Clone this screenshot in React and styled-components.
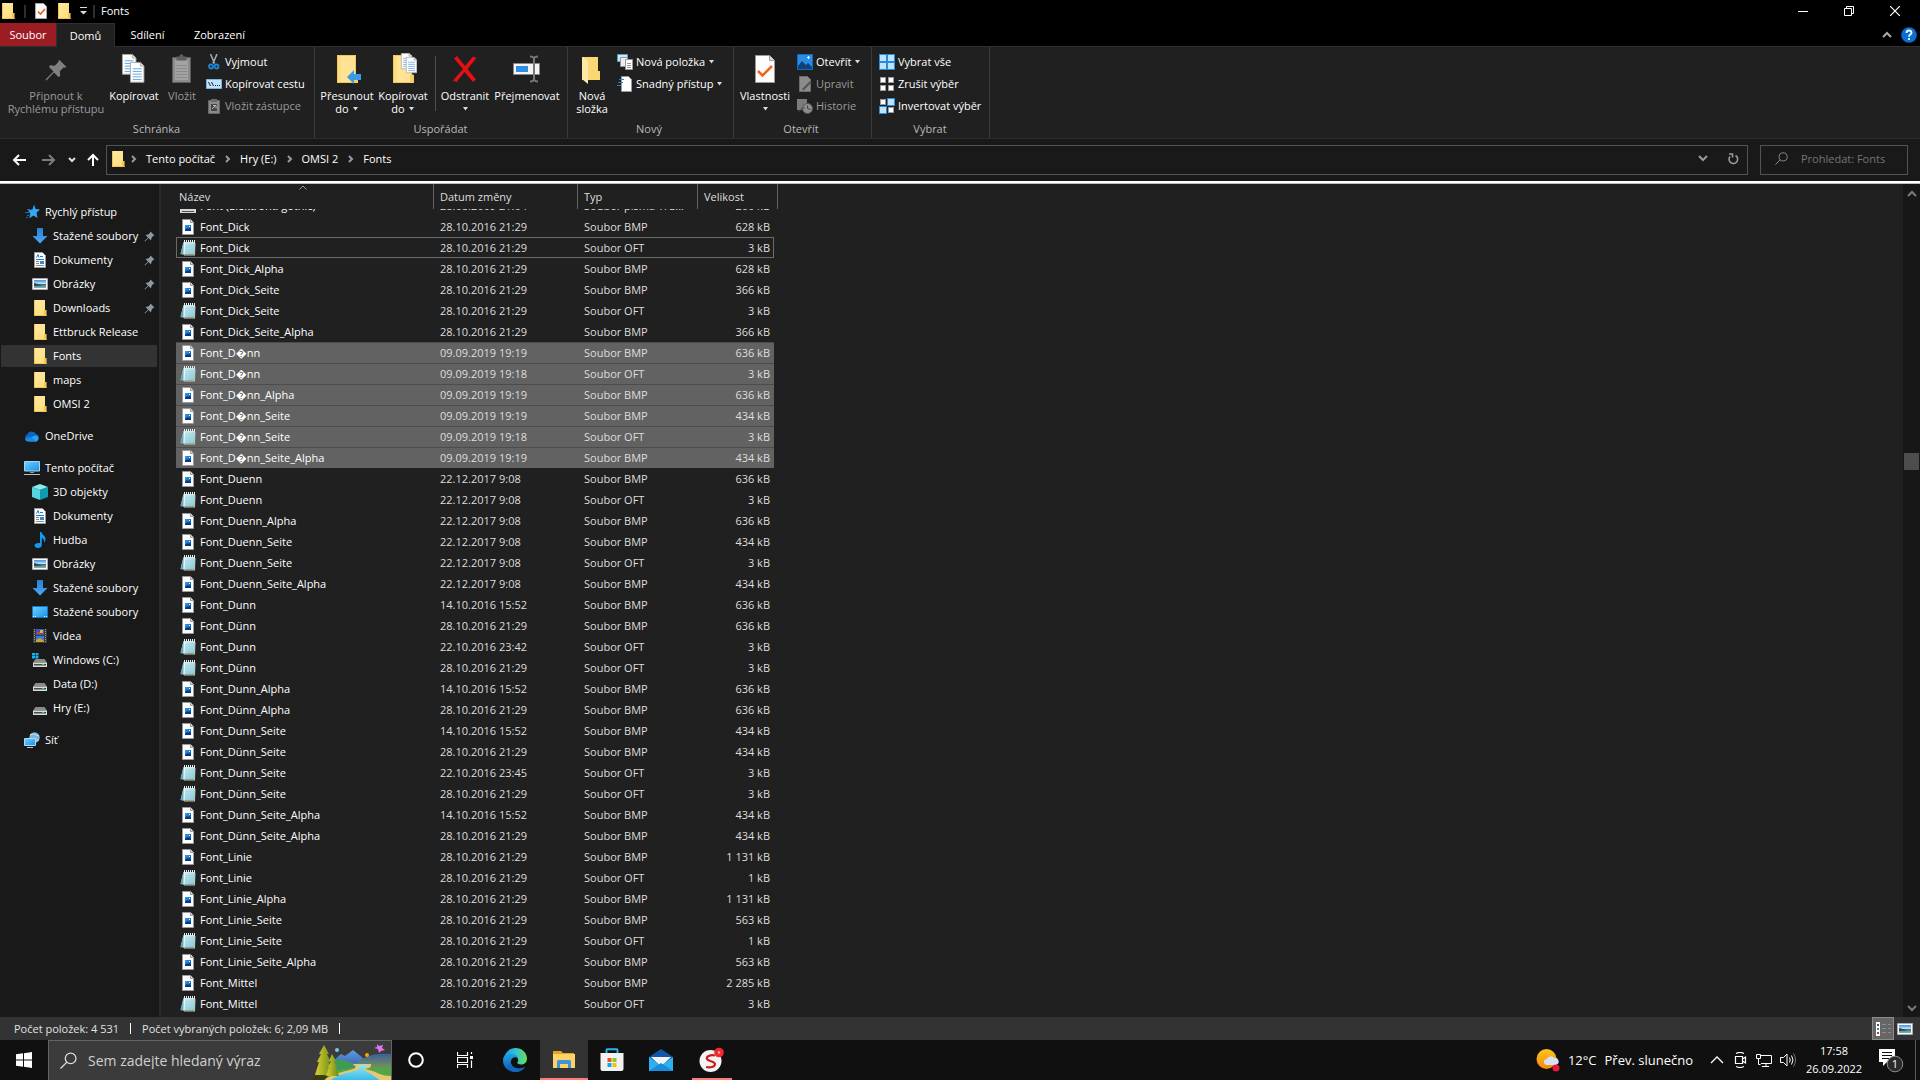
import React, { useLayoutEffect, useRef } from 'react';
import styled, { createGlobalStyle } from 'styled-components';

const GlobalStyle = createGlobalStyle`
  * { box-sizing: border-box; }
  body {
    margin: 0;
    background: #191919;
    color: #fff;
    font-family: "Open Sans", "Noto Sans", sans-serif;
    font-size: 11px;
    line-height: 16px;
  }
  button, input { font: inherit; color: inherit; }
  button { background: none; border: 0; padding: 0; }
  a { color: inherit; text-decoration: none; }
  svg { display: block; flex: none; }
`;

const Desktop = styled.div`
  height: 100vh;
  display: flex;
  flex-direction: column;
  overflow: hidden;
`;

/* ---------- title bar and tabs ---------- */

const TitleBar = styled.header`
  height: 23px;
  flex: none;
  display: flex;
  align-items: center;
  padding: 0 2px 1px 0;
  background: #000;
`;

const QuickAccess = styled.div`
  display: flex;
  align-items: center;
  gap: 8px;
`;

const Caption1 = styled.div`
  flex: 1;
  display: flex;
  align-items: center;
  gap: 6px;
  padding-left: 6px;
`;

const Divider = styled.span`
  width: 2px;
  height: 13px;
  background: #2e2e2e;
`;

const WindowTitle = styled.h1`
  margin: 0;
  font-size: 11px;
  font-weight: 400;
`;

const WindowButton = styled.button`
  width: 46px;
  height: 22px;
  display: flex;
  align-items: center;
  justify-content: center;
`;

const TabRow = styled.nav`
  height: 23px;
  flex: none;
  display: flex;
  background: #000;
`;

const Tab = styled.button`
  width: ${p => p.$width}px;
  height: ${p => (p.$active ? 24 : 23)}px;
  position: relative;
  background: ${p => (p.$file ? '#9c1c24' : p.$active ? '#202020' : 'none')};
  border: 1px solid ${p => (p.$active ? '#2f2f2f' : 'transparent')};
  border-bottom: 0;
`;

const TabTools = styled.div`
  margin-left: auto;
  display: flex;
  align-items: center;
  gap: 9px;
  padding-right: 3px;
`;

/* ---------- ribbon ---------- */

const Ribbon = styled.section`
  height: 93px;
  flex: none;
  display: flex;
  background: #202020;
  border-top: 1px solid #2f2f2f;
  border-bottom: 1px solid #2b2b2b;
`;

const Group = styled.div`
  width: ${p => p.$width}px;
  display: flex;
  flex-direction: column;
  padding: 2px 0 0 ${p => p.$pad || 4}px;
  border-right: 1px solid #3a3a3a;
`;

const GroupBody = styled.div`
  display: flex;
  height: 72px;
`;

const GroupLabel = styled.div`
  padding-right: 5px;
  text-align: center;
  color: #b9b9b9;
`;

const BigButton = styled.button`
  width: ${p => p.$width}px;
  display: flex;
  flex-direction: column;
  align-items: center;
  padding-top: 4px;
  line-height: 13px;
  white-space: nowrap;
  color: ${p => (p.$dim ? '#9a9a9a' : '#fff')};

  svg.big { margin-bottom: 4px; }
`;

const Caption = styled.span`
  display: flex;
  align-items: center;
  gap: 3px;
  min-height: 13px;
`;

const InnerLine = styled.span`
  width: 1px;
  height: 55px;
  margin: 7px 2px 0 4px;
  background: #4f4f4f;
`;

const SmallColumn = styled.div`
  display: flex;
  flex-direction: column;
  padding: 2px 0 0 ${p => p.$pad || 3}px;
`;

const SmallButton = styled.button`
  height: 22px;
  display: flex;
  align-items: center;
  gap: 3px;
  white-space: nowrap;
  color: ${p => (p.$dim ? '#9a9a9a' : '#fff')};
`;

/* ---------- address bar ---------- */

const AddressRow = styled.div`
  height: 42px;
  flex: none;
  display: flex;
  align-items: center;
  padding: 0 12px 1px;
  background: #191919;
`;

const NavButtons = styled.div`
  display: grid;
  grid-template-columns: 30px 26px 19px 19px;
  align-items: center;
`;

const AddressBox = styled.div`
  flex: 1;
  height: 30px;
  display: flex;
  align-items: center;
  padding: 0 0 2px 3px;
  border: 1px solid #535353;
`;

const Crumb = styled.a`
  padding: 0 10px 0 9px;
`;

const Chevron = styled.span`
  display: flex;
  padding-left: 5px;
`;

const AddressTools = styled.div`
  margin-left: auto;
  display: flex;
  align-items: center;
  gap: 19px;
  padding-right: 8px;
`;

const SearchBox = styled.label`
  width: 148px;
  height: 30px;
  margin-left: 12px;
  display: flex;
  align-items: center;
  gap: 13px;
  padding: 0 4px 2px 14px;
  border: 1px solid #535353;
`;

const SearchInput = styled.input`
  flex: 1;
  min-width: 0;
  padding: 0;
  border: 0;
  outline: 0;
  background: none;

  &::placeholder { color: #757575; opacity: 1; }
`;

const WhiteLine = styled.div`
  height: 3px;
  flex: none;
  background: #fff;
  border-bottom: 1px solid #bdbdbd;
`;

/* ---------- body ---------- */

const Body = styled.div`
  flex: 1;
  min-height: 0;
  display: flex;
`;

const Sidebar = styled.aside`
  width: 161px;
  flex: none;
  display: flex;
  flex-direction: column;
  gap: 8px;
  padding: 16px 2px 0 1px;
  background: #191919;
  border-right: 2px solid #2a2a2a;
`;

const SideItem = styled.a`
  height: 24px;
  display: flex;
  align-items: center;
  gap: 5px;
  padding-left: ${p => (p.$root ? 23 : 31)}px;
  padding-right: 2px;
  white-space: nowrap;
  border: solid #191919;
  border-width: 1px 0;
  background: ${p => (p.$active ? '#333' : 'none')};
  background-clip: padding-box;

  .pin { margin-left: auto; }
`;

const ListPane = styled.main`
  flex: 1;
  overflow: hidden;
  padding-left: 15px;
  background: #202020;
`;

const Table = styled.table`
  width: 598px;
  table-layout: fixed;
  border-spacing: 0;
`;

const HeadCell = styled.th`
  position: sticky;
  top: 0;
  z-index: 1;
  width: ${p => p.$width}px;
  height: 25px;
  padding: 0 0 0 ${p => p.$pad}px;
  text-align: left;
  font-weight: 400;
  color: #dedede;
  background: #202020;

  &::after {
    content: "";
    position: absolute;
    top: 0;
    right: ${p => (p.$last ? -4 : 0)}px;
    width: 1px;
    height: 25px;
    background: #636363;
  }
`;

const SortMark = styled.svg`
  position: absolute;
  top: 1px;
  left: calc(50% - 6px);
`;

const Row = styled.tr`
  background: ${p => (p.$selected ? '#626262' : 'none')};
  outline: ${p => (p.$focused ? '1px solid #6a6a6a' : 'none')};
  outline-offset: -1px;

  td {
    height: 21px;
    padding: 0 0 0 6px;
    white-space: nowrap;
    color: #dedede;
    box-shadow: ${p => (p.$selected ? 'inset 0 1px 0 #4c4c4c' : 'none')};
  }
  td:first-child { padding-left: 4px; color: #fff; }
  td:last-child { padding: 0 4px 0 0; text-align: right; }
`;

const FileName = styled.span`
  display: flex;
  align-items: center;
  gap: 4px;
`;

const Scrollbar = styled.div`
  width: 17px;
  display: flex;
  flex-direction: column;
  align-items: center;
  padding: 6px 0 5px;
  background: #171717;
`;

const Thumb = styled.div`
  width: 15px;
  height: 17px;
  background: #4d4d4d;
`;

const Space = styled.div`
  flex: ${p => p.$grow};
`;

const StatusBar = styled.footer`
  height: 23px;
  flex: none;
  display: flex;
  align-items: center;
  gap: 11px;
  padding-left: 14px;
  background: #333;
  color: #e2e2e2;
`;

const StatusLine = styled.span`
  width: 1px;
  height: 11px;
  background: #fff;
`;

const ViewButtons = styled.div`
  margin-left: auto;
  display: flex;
  height: 23px;
`;

const ViewButton = styled.button`
  width: 22px;
  height: 23px;
  margin-right: ${p => (p.$active ? 0 : 4)}px;
  display: flex;
  align-items: center;
  justify-content: center;
  background: ${p => (p.$active ? '#666' : 'none')};
  border: 1px solid ${p => (p.$active ? '#8a8a8a' : 'transparent')};
`;

/* ---------- taskbar ---------- */

const Taskbar = styled.div`
  height: 40px;
  flex: none;
  display: flex;
  background: #101010;
`;

const TaskButton = styled.button`
  width: ${p => p.$width || 49}px;
  height: 40px;
  margin-left: ${p => (p.$narrow ? 6 : 0)}px;
  display: flex;
  align-items: center;
  justify-content: center;
  background: ${p => (p.$active ? '#333' : 'none')};
  border-bottom: 2px solid ${p => (p.$open ? '#ff7b7b' : 'transparent')};
  border-top: 2px solid transparent;
`;

const TaskSearch = styled.label`
  width: 344px;
  display: flex;
  align-items: center;
  gap: 11px;
  padding-left: 11px;
  background: #3b3b3b;
  border: 1px solid #646464;
  border-bottom-width: 0;
`;

const TaskInput = styled.input`
  flex: 1;
  min-width: 0;
  padding: 0;
  border: 0;
  outline: 0;
  background: none;
  font-size: 14px;

  &::placeholder { color: #d0d0d0; opacity: 1; }
`;

const Tray = styled.div`
  margin-left: auto;
  display: flex;
  align-items: center;
`;

const Weather = styled.button`
  display: flex;
  align-items: center;
  gap: 8px;
  font-size: 13px;
  white-space: nowrap;
`;

const TrayIcons = styled.div`
  display: flex;
  align-items: center;
  gap: 8px;
  margin-left: 17px;
`;

const Clock = styled.time`
  width: 58px;
  margin: 0 15px 0 9px;
  display: flex;
  flex-direction: column;
  align-items: center;
  line-height: 18px;
`;

const Notifications = styled.button`
  margin-right: 11px;
`;

const Peek = styled.div`
  width: 5px;
  height: 40px;
  border-left: 1px solid #5a5a5a;
`;

/* ---------- icons ---------- */

const Svg = ({ w = 16, h = 16, children, ...rest }) => (
  <svg width={w} height={h} viewBox={`0 0 ${w} ${h}`} aria-hidden="true" {...rest}>{children}</svg>
);

const HiddenSvg = styled.svg`
  position: absolute;
`;

const Defs = () => (
  <HiddenSvg width="0" height="0" aria-hidden="true">
    <defs>
      <linearGradient id="gFolder" x1="0" y1="0" x2="1" y2="1">
        <stop offset="0" stopColor="#ffe9a6" /><stop offset="1" stopColor="#ffdc78" />
      </linearGradient>
      <linearGradient id="gPhoto" x1="0" y1="0" x2="0" y2="1">
        <stop offset="0" stopColor="#3f8fe8" /><stop offset=".5" stopColor="#cfeafa" /><stop offset=".51" stopColor="#3d6f62" /><stop offset="1" stopColor="#7fb6d2" />
      </linearGradient>
      <linearGradient id="gBmp" x1="0" y1="0" x2="1" y2="1">
        <stop offset="0" stopColor="#2fa4ee" /><stop offset="1" stopColor="#0c4ea0" />
      </linearGradient>
      <linearGradient id="gPad" x1="0" y1="0" x2="1" y2="1">
        <stop offset="0" stopColor="#d9f4f8" /><stop offset="1" stopColor="#84c6d6" />
      </linearGradient>
      <linearGradient id="gScreen" x1="0" y1="0" x2="1" y2="1">
        <stop offset="0" stopColor="#6fd0ff" /><stop offset="1" stopColor="#1a8fe8" />
      </linearGradient>
      <linearGradient id="gArrow" x1="0" y1="0" x2="0" y2="1">
        <stop offset="0" stopColor="#2d7fd6" /><stop offset="1" stopColor="#48a8f5" />
      </linearGradient>
      <linearGradient id="gEdge" x1="0" y1="0" x2="1" y2="0">
        <stop offset="0" stopColor="#1b9de2" /><stop offset=".5" stopColor="#2fc3d8" /><stop offset="1" stopColor="#6be04e" />
      </linearGradient>
      <linearGradient id="gEdge2" x1="0" y1="0" x2="0" y2="1">
        <stop offset="0" stopColor="#1fa4e6" /><stop offset="1" stopColor="#0f57b0" />
      </linearGradient>
      <linearGradient id="gTree" x1="0" y1="0" x2="1" y2="0">
        <stop offset="0" stopColor="#e3cf2b" /><stop offset="1" stopColor="#5f8a1f" />
      </linearGradient>
      <linearGradient id="gHill" x1="0" y1="0" x2="0" y2="1">
        <stop offset="0" stopColor="#3c5f9c" /><stop offset=".45" stopColor="#6d8b63" /><stop offset="1" stopColor="#4f9e4a" />
      </linearGradient>
      <linearGradient id="gPeak" x1="0" y1="0" x2="0" y2="1">
        <stop offset="0" stopColor="#5e9fe0" /><stop offset="1" stopColor="#2e4aa6" />
      </linearGradient>
      <linearGradient id="gRiver" x1="0" y1="0" x2="0" y2="1">
        <stop offset="0" stopColor="#8be9f2" /><stop offset="1" stopColor="#38b6e8" />
      </linearGradient>
      <linearGradient id="gSun" x1="0" y1="0" x2="0" y2="1">
        <stop offset="0" stopColor="#ffc31f" /><stop offset="1" stopColor="#f58a0b" />
      </linearGradient>
    </defs>
  </HiddenSvg>
);

const Folder = () => (
  <Svg>
    <path d="M2 0h11v10h1.500v6H2z" fill="url(#gFolder)" />
    <path d="M12 10h2v5.500h-2z" fill="#f2c94c" /><path d="M2.500 0v16M2 15.500h12.500" stroke="#efc64e" />
  </Svg>
);

const BigFolder = ({ children }) => (
  <Svg className="big" w={28} h={32}>
    <path d="M4 2h19v20h2v8H4z" fill="#ffe293" /><path d="M4 2h4v28H4z" fill="#ffdc80" />
    <path d="M4.500 2.500h18v19.500h2v7.500h-20z" fill="none" stroke="#efc95a" />
    <path d="M21 22h3.500v7.500H21z" fill="#f6d15f" />
    {children}
  </Svg>
);

const Check = () => (
  <Svg w={14}>
    <path d="M1.500.5h8l3 3v12h-11z" fill="#fbfbfb" stroke="#a5a5a5" />
    <path d="M4 8.500l2.500 2.500 4.500-5" fill="none" stroke="#ea5a1c" strokeWidth="1.600" />
  </Svg>
);

const Bmp = () => (
  <Svg>
    <path d="M2.500.5h8l3 3v12h-11z" fill="#fdfdfd" stroke="#9b9b9b" />
    <path d="M10.500.5v3h3" fill="#ddd" stroke="#9b9b9b" />
    <path d="M5 6h6v6H5z" fill="url(#gBmp)" /><path d="M5 11l2-2 1.500 1 1-1 1.500 1.500V12H5z" fill="#093a80" />
    <path d="M9 7h1v1H9z" fill="#fff" />
  </Svg>
);

const Notepad = () => (
  <Svg>
    <path d="M14 3h1.500l-.5 12.500H4v-1h10z" fill="#d8c193" />
    <path d="M3.500 2H15l-.5 12.500H4L.5 14z" fill="url(#gPad)" />
    <path d="M3.500 2L.5 14l3 .5z" fill="#6aa3b0" /><path d="M4.500 3L4 14.500" stroke="#eefafc" />
    <path d="M4.500 0v3M6.500 0v3M8.500 0v3M10.500 0v3M12.500 0v3M14.500 0v3" stroke="#e9eef0" />
    <path d="M5 5.500h9M5 7.500h9M5 9.500h9M5 11.500h9" stroke="#9fd3de" strokeWidth=".6" />
  </Svg>
);

const FontFile = () => <Svg><path d="M0 1h16v14H0z" fill="#d6d6d6" /><path d="M2 13.500h12" stroke="#555" /></Svg>;

const Star = () => (
  <Svg>
    <path d="M10 .5l1.600 4.500 4.400.5-3.500 3.200 1 5.300-4.200-2.500-4 3 1-5L4 6.500l4.600-1.200z" fill="#2fa8f5" />
    <path d="M3 5.500h3M1 8.500h4M3 11.500h2M2 14l2-1" stroke="#1c74c4" />
  </Svg>
);

const Down = () => <Svg><path d="M5 0h6v8h4.500L8 15.500.5 8H5z" fill="url(#gArrow)" /></Svg>;

const Doc = () => (
  <Svg>
    <path d="M2.500.5h8l3 3v12h-11z" fill="#fdfdfd" stroke="#9b9b9b" />
    <path d="M4.500 5.500l1.500-3 1 3M8 4.500h3M4 7.500h8" stroke="#1f7fd0" fill="none" />
    <path d="M4 9.500h3M4 11.500h3M4 13.500h8" stroke="#8b8b8b" /><path d="M8 9h4v3H8z" fill="#3a8bc8" />
  </Svg>
);

const Photo = () => (
  <Svg>
    <path d="M.5 2.500h15v11H.5z" fill="#fff" stroke="#aaa" /><path d="M2 4h12v8H2z" fill="url(#gPhoto)" />
    <path d="M2 7l4 1 4 1.500L2 10z" fill="#264f3f" />
  </Svg>
);

const Cloud = () => (
  <Svg>
    <path d="M3.500 13A3.500 3.500 0 013 6.500 5 5 0 0112 6a3.800 3.800 0 011 7z" fill="#0b66c2" />
    <path d="M5 13.500h7.500a3.300 3.300 0 000-6c-3-.3-6 2-7.500 6z" fill="#2aa5ee" /><path d="M1 11.500c2-3 5-3 9-.5l2.500 2.500H3.500A3 3 0 011 11.500z" fill="#1b8be0" />
  </Svg>
);

const Pc = () => (
  <Svg>
    <path d="M.5 1.500h15v9.500H.5z" fill="url(#gScreen)" stroke="#9fd8f7" /><path d="M6 12h4v1H6z" fill="#8b98a2" /><path d="M0 14.500h16" stroke="#b7c3cb" />
  </Svg>
);

const Cube = () => (
  <Svg>
    <path d="M8 0l8 3-8 3-8-3z" fill="#8eeaf0" /><path d="M0 3l8 3v10l-8-3z" fill="#55d3de" /><path d="M16 3L8 6v10l8-3z" fill="#109bb4" />
  </Svg>
);

const Note = () => (
  <Svg>
    <path d="M8 0h1.500c.3 3 4 3.500 4 7 0 1.700-.8 3-1.500 3.500.3-2.500-.2-3.800-2.200-4.500V13c0 2-1.800 3-3.800 3S2.500 15 2.500 13.500 4 10.800 8 11z" fill="#1499f2" />
  </Svg>
);

const Screen = () => (
  <Svg><path d="M.5 2.500h15v11H.5z" fill="url(#gScreen)" stroke="#1477cc" /><path d="M1 12.500h3M12 12.500h3" stroke="#dff" strokeDasharray="1 1" /></Svg>
);

const Film = () => (
  <Svg>
    <path d="M1 1h14v14H1z" fill="#3a3a3a" /><path d="M2.500 1v14M13.500 1v14" stroke="#9a9a9a" strokeDasharray="1 1" />
    <path d="M4 1h8v6H4z" fill="#4055b8" /><path d="M4 8h8v6H4z" fill="#3e78cf" /><path d="M8 2h3v3H8z" fill="#e0b52c" /><path d="M5 4h3v2H5z" fill="#c2493d" /><path d="M4 12l4-2 4 3v1H4z" fill="#c9a42e" />
  </Svg>
);

const Drive = ({ win }) => (
  <Svg>
    {win && <path d="M0 1h3v2.500H0zM3.500 1h3v2.500h-3zM0 4h3v2.500H0zM3.500 4h3v2.500h-3z" fill="#12b3f0" />}
    <path d="M3.500 7h9l2.500 3.500H1z" fill="#8a8a8a" /><path d="M1 10.500h14V15H1z" fill="#d9d9d9" /><path d="M2 12h12v1.500H2z" fill="#4b4b4b" /><path d="M10 12h2v1.500h-2z" fill="#25d04a" />
  </Svg>
);

const Network = () => (
  <Svg>
    <circle cx="10.500" cy="5.500" r="5.200" fill="#7fb4d8" /><path d="M6 3c3-2 6 0 9 1M6 7c4-1 5 2 9 1" stroke="#d2e6f2" fill="none" />
    <path d="M.5 6.500h11v7H.5z" fill="url(#gScreen)" stroke="#a9dcf8" /><path d="M3 15.500h6" stroke="#b7c3cb" />
  </Svg>
);

const Pin = () => (
  <Svg className="pin" w={11} h={11}><path d="M6.500.5L10.500 4.500 9 5l-1.500 2-.5 2.500L4.500 7 1 10.500.5 10 4 6.500 1.500 4 4 3.500l2-1.500z" fill="#8d98a2" /></Svg>
);

const PAGE = 'M.5.5h11l4 4v18H.5z';
const CopyPage = ({ x, y, s = 1 }) => (
  <g transform={`translate(${x} ${y}) scale(${s})`}>
    <path d={PAGE} fill="#fdfdfd" stroke="#a6a6a6" /><path d="M11.500.5v4h4" fill="#ddd" stroke="#a6a6a6" />
    <path d="M3 7.500h10M3 10.500h10M3 13.500h10M3 16.500h10M3 19.500h10" stroke="#5aa0e0" />
  </g>
);

const DropArrow = () => <Svg w={7} h={4}><path d="M1 0h5L3.500 3.500z" fill="#dcdcdc" /></Svg>;
const Chev = ({ d = 'M1 1l3 3-3 3', w = 6, h = 8, c = '#9a9a9a', sw = 1 }) => (
  <Svg w={w} h={h}><path d={d} fill="none" stroke={c} strokeWidth={sw} /></Svg>
);
const Lens = ({ c = '#8a8a8a', s = 13 }) => (
  <svg width={s} height={s} viewBox="0 0 16 16" aria-hidden="true"><circle cx="10" cy="6" r="5" fill="none" stroke={c} strokeWidth="1.200" /><path d="M6.500 9.500L.5 15.500" stroke={c} strokeWidth="1.200" /></svg>
);

const Tiles = ({ on }) => (
  <Svg>
    {[[0, 0], [8, 0], [0, 8], [8, 8]].map(([x, y], i) => (
      <rect key={i} x={x + (on[i] ? 0.5 : 1.5)} y={y + (on[i] ? 0.5 : 1.5)} width={on[i] ? 7 : 5} height={on[i] ? 7 : 5}
        fill={on[i] ? '#bfe3fb' : '#fff'} stroke={on[i] ? '#2a8ade' : '#9a9a9a'} />
    ))}
  </Svg>
);

/* ---------- data ---------- */

const quick = [
  ['Rychlý přístup', Star, 'root'],
  ['Stažené soubory', Down, 'pin'],
  ['Dokumenty', Doc, 'pin'],
  ['Obrázky', Photo, 'pin'],
  ['Downloads', Folder, 'pin'],
  ['Ettbruck Release', Folder],
  ['Fonts', Folder, 'active'],
  ['maps', Folder],
  ['OMSI 2', Folder],
];

const computer = [
  ['Tento počítač', Pc, 'root'],
  ['3D objekty', Cube],
  ['Dokumenty', Doc],
  ['Hudba', Note],
  ['Obrázky', Photo],
  ['Stažené soubory', Down],
  ['Stažené soubory', Screen],
  ['Videa', Film],
  ['Windows (C:)', () => <Drive win />],
  ['Data (D:)', Drive],
  ['Hry (E:)', Drive],
];

const sections = [quick, [['OneDrive', Cloud, 'root']], computer, [['Síť', Network, 'root']]];

const A = '28.10.2016 21:29';
const B = '22.12.2017 9:08';
const C = '14.10.2016 15:52';

// name, date, type, size
const files = [
  ['Font (Elektronti gothic)', '28.08.2009 21:04', 'Soubor písma Tru...', '200'],
  ['Font_Dick', A, 'BMP', '628'],
  ['Font_Dick', A, 'OFT', '3', 'focused'],
  ['Font_Dick_Alpha', A, 'BMP', '628'],
  ['Font_Dick_Seite', A, 'BMP', '366'],
  ['Font_Dick_Seite', A, 'OFT', '3'],
  ['Font_Dick_Seite_Alpha', A, 'BMP', '366'],
  ['Font_D\uFFFDnn', '09.09.2019 19:19', 'BMP', '636', 'selected'],
  ['Font_D\uFFFDnn', '09.09.2019 19:18', 'OFT', '3', 'selected'],
  ['Font_D\uFFFDnn_Alpha', '09.09.2019 19:19', 'BMP', '636', 'selected'],
  ['Font_D\uFFFDnn_Seite', '09.09.2019 19:19', 'BMP', '434', 'selected'],
  ['Font_D\uFFFDnn_Seite', '09.09.2019 19:18', 'OFT', '3', 'selected'],
  ['Font_D\uFFFDnn_Seite_Alpha', '09.09.2019 19:19', 'BMP', '434', 'selected'],
  ['Font_Duenn', B, 'BMP', '636'],
  ['Font_Duenn', B, 'OFT', '3'],
  ['Font_Duenn_Alpha', B, 'BMP', '636'],
  ['Font_Duenn_Seite', B, 'BMP', '434'],
  ['Font_Duenn_Seite', B, 'OFT', '3'],
  ['Font_Duenn_Seite_Alpha', B, 'BMP', '434'],
  ['Font_Dunn', C, 'BMP', '636'],
  ['Font_Dünn', A, 'BMP', '636'],
  ['Font_Dunn', '22.10.2016 23:42', 'OFT', '3'],
  ['Font_Dünn', A, 'OFT', '3'],
  ['Font_Dunn_Alpha', C, 'BMP', '636'],
  ['Font_Dünn_Alpha', A, 'BMP', '636'],
  ['Font_Dunn_Seite', C, 'BMP', '434'],
  ['Font_Dünn_Seite', A, 'BMP', '434'],
  ['Font_Dunn_Seite', '22.10.2016 23:45', 'OFT', '3'],
  ['Font_Dünn_Seite', A, 'OFT', '3'],
  ['Font_Dunn_Seite_Alpha', C, 'BMP', '434'],
  ['Font_Dünn_Seite_Alpha', A, 'BMP', '434'],
  ['Font_Linie', A, 'BMP', '1 131'],
  ['Font_Linie', A, 'OFT', '1'],
  ['Font_Linie_Alpha', A, 'BMP', '1 131'],
  ['Font_Linie_Seite', A, 'BMP', '563'],
  ['Font_Linie_Seite', A, 'OFT', '1'],
  ['Font_Linie_Seite_Alpha', A, 'BMP', '563'],
  ['Font_Mittel', A, 'BMP', '2 285'],
  ['Font_Mittel', A, 'OFT', '3'],
  ['Font_Mittel_Alpha', A, 'BMP', '2 285'],
];

/* ---------- parts ---------- */

function RibbonBar() {
  return (
    <Ribbon>
      <Group $width={315}>
        <GroupBody>
          <BigButton $width={104} $dim>
            <Svg className="big" w={28} h={32}><path d="M17.500 7l7 7-2 .8-.7-.5-4 4 .5 4.700-1.800 1-4.500-4.500L5 27l-1.500.5L4 26l7.500-7.500L7 14l1-1.800 4.700.5 4-4-.5-.7z" fill="#808080" /></Svg>
            <Caption>Připnout k</Caption><Caption>Rychlému přístupu</Caption>
          </BigButton>
          <BigButton $width={52}>
            <Svg className="big" w={28} h={32}><CopyPage x={2} y={1} s={0.9} /><CopyPage x={10} y={9} s={0.9} /></Svg>
            <Caption>Kopírovat</Caption>
          </BigButton>
          <BigButton $width={44} $dim>
            <Svg className="big" w={28} h={32}>
              <path d="M4.500 4.500h18v25h-18z" fill="#8b8b8b" stroke="#5c5c5c" /><path d="M7 7h13v20H7z" fill="#a3a3a3" />
              <path d="M8.500 3.500h3c0-3 4-3 4 0h3v4h-10z" fill="#5f5f5f" />
              <path d="M8 12.500h11M8 15.500h11M8 18.500h11M8 21.500h11M8 24.500h11" stroke="#8b8b8b" />
            </Svg>
            <Caption>Vložit</Caption>
          </BigButton>
          <SmallColumn $pad={2}>
            <SmallButton>
              <Svg><path d="M4.500 0l4 9.500M11 0L7 9.500" stroke="#a3adb5" strokeWidth="1.500" /><circle cx="5" cy="12.500" r="2" fill="none" stroke="#1e86d2" strokeWidth="1.800" /><circle cx="10.500" cy="12.500" r="2" fill="none" stroke="#1e86d2" strokeWidth="1.800" /></Svg>
              Vyjmout
            </SmallButton>
            <SmallButton>
              <Svg><path d="M.5 3.500h15v9H.5z" fill="#bfe3fb" stroke="#7ab4dc" /><path d="M2.500 6l2 4M5.500 6l2 4M9 9.500h1M11 9.500h1M13 9.500h1" stroke="#123" /></Svg>
              Kopírovat cestu
            </SmallButton>
            <SmallButton $dim>
              <Svg><path d="M2.500 2.500h11v13h-11z" fill="#8a8a8a" stroke="#666" /><path d="M5 1h6v3H5z" fill="#6b6b6b" /><path d="M5 6h6v7H5z" fill="#444" /><path d="M6 11l3-3M7 7.500h3v3" stroke="#bbb" fill="none" /></Svg>
              Vložit zástupce
            </SmallButton>
          </SmallColumn>
        </GroupBody>
        <GroupLabel>Schránka</GroupLabel>
      </Group>

      <Group $width={253}>
        <GroupBody>
          <BigButton $width={56}>
            <BigFolder><path d="M14 24l7-7v4h7v6h-7v4z" fill="#3b9ae8" /></BigFolder>
            <Caption>Přesunout</Caption><Caption>do <DropArrow /></Caption>
          </BigButton>
          <BigButton $width={56}>
            <BigFolder><CopyPage x={12} y={0} s={0.7} /><CopyPage x={17} y={4} s={0.7} /></BigFolder>
            <Caption>Kopírovat</Caption><Caption>do <DropArrow /></Caption>
          </BigButton>
          <InnerLine />
          <BigButton $width={54}>
            <Svg className="big" w={28} h={32}><path d="M3 5.500l3-2.500 8 10 8-9.500 3.500 1.500-9 11 8.500 10.500-3 2.500-8.500-10L5.500 29 2 27.500 12 16z" fill="#e60f14" /></Svg>
            <Caption>Odstranit</Caption><Caption><DropArrow /></Caption>
          </BigButton>
          <BigButton $width={70}>
            <Svg className="big" w={28} h={32}>
              <path d="M.5 10.500h26v11H.5z" fill="#f4f4f4" stroke="#888" /><path d="M3 13h12v6H3z" fill="#2e8fe0" />
              <path d="M17 3.500c3 0 3.500.5 4 2 .5-1.500 1-2 4-2M21 5v22M17 28.500c3 0 3.500-.5 4-2 .5 1.500 1 2 4 2" stroke="#777" strokeWidth="2" fill="none" />
            </Svg>
            <Caption>Přejmenovat</Caption>
          </BigButton>
        </GroupBody>
        <GroupLabel>Uspořádat</GroupLabel>
      </Group>

      <Group $width={166} $pad={2}>
        <GroupBody>
          <BigButton $width={44}>
            <Svg className="big" w={28} h={32}><path d="M4 4h16v14h2v9H4z" fill="#f8d775" /><path d="M4 4l6 4v23l-6-5z" fill="#ffe9a8" /></Svg>
            <Caption>Nová</Caption><Caption>složka</Caption>
          </BigButton>
          <SmallColumn>
            <SmallButton>
              <Svg><path d="M.5.5h10v7H.5z" fill="#c8e7f7" stroke="#5c9cc0" /><path d="M3.500 3.500h7v9h-7z" fill="#eee" stroke="#999" /><path d="M8.500 5.500h7v10h-7z" fill="#fff" stroke="#999" /><path d="M10 9.500h4M10 11.500h4M10 13.500h4" stroke="#999" /></Svg>
              Nová položka <DropArrow />
            </SmallButton>
            <SmallButton>
              <Svg><path d="M4.500.5h7l3 3v12h-10z" fill="#fff" stroke="#999" /><path d="M2 3.500h5M1 6.500h5M0 9.500h4" stroke="#1d7fd0" /></Svg>
              Snadný přístup <DropArrow />
            </SmallButton>
          </SmallColumn>
        </GroupBody>
        <GroupLabel>Nový</GroupLabel>
      </Group>

      <Group $width={138} $pad={2}>
        <GroupBody>
          <BigButton $width={58}>
            <Svg className="big" w={28} h={32}><path d="M4.500 2.500h14l5 5v22h-19z" fill="#fdfdfd" stroke="#999" /><path d="M18.500 2.500v5h5" fill="#ddd" stroke="#999" /><path d="M7 18l4.500 4.500L21 13" fill="none" stroke="#f4631e" strokeWidth="2.500" /></Svg>
            <Caption>Vlastnosti</Caption><Caption><DropArrow /></Caption>
          </BigButton>
          <SmallColumn>
            <SmallButton>
              <Svg><path d="M.5.5h15v15H.5z" fill="#2a8ee6" stroke="#0f6dc4" /><path d="M1 12l4-5 4 4 2-2 4 4v2H1z" fill="#123f78" /><path d="M11.500 2v3M10 3.500h3" stroke="#fff" /></Svg>
              Otevřít <DropArrow />
            </SmallButton>
            <SmallButton $dim>
              <Svg><path d="M2.500.5h8l3 3v12h-11z" fill="#8b8b8b" stroke="#6b6b6b" /><path d="M5 13l8-8 1.500 1.500-8 8z" fill="#555" /></Svg>
              Upravit
            </SmallButton>
            <SmallButton $dim>
              <Svg><path d="M0 1h10v11H0z" fill="#7c7c7c" /><circle cx="10.500" cy="10.500" r="5" fill="#8e8e8e" stroke="#555" /><path d="M10.500 7.500v3l3 1M2 14c2-4 4-4 6-4" stroke="#444" fill="none" /></Svg>
              Historie
            </SmallButton>
          </SmallColumn>
        </GroupBody>
        <GroupLabel>Otevřít</GroupLabel>
      </Group>

      <Group $width={118}>
        <GroupBody>
          <SmallColumn>
            <SmallButton><Tiles on={[1, 1, 1, 1]} />Vybrat vše</SmallButton>
            <SmallButton><Tiles on={[0, 0, 0, 0]} />Zrušit výběr</SmallButton>
            <SmallButton><Tiles on={[0, 1, 1, 0]} />Invertovat výběr</SmallButton>
          </SmallColumn>
        </GroupBody>
        <GroupLabel>Vybrat</GroupLabel>
      </Group>
    </Ribbon>
  );
}

function AddressBar() {
  return (
    <AddressRow>
      <NavButtons>
        <button aria-label="Zpět"><Svg w={14} h={12}><path d="M14 6H2M7 1L2 6l5 5" fill="none" stroke="#fff" strokeWidth="2" /></Svg></button>
        <button aria-label="Vpřed"><Svg w={14} h={12}><path d="M0 6h12M7 1l5 5-5 5" fill="none" stroke="#7d7d7d" strokeWidth="2" /></Svg></button>
        <button aria-label="Poslední umístění"><Chev d="M1 1l3 3 3-3" w={8} h={6} c="#ddd" sw={2} /></button>
        <button aria-label="Nahoru"><Svg w={12} h={13}><path d="M6 13V2M1 7l5-5 5 5" fill="none" stroke="#fff" strokeWidth="2" /></Svg></button>
      </NavButtons>
      <AddressBox>
        <Folder />
        <Chevron><Chev sw={2} /></Chevron>
        <Crumb href="#">Tento počítač</Crumb><Chev sw={2} />
        <Crumb href="#">Hry (E:)</Crumb><Chev sw={2} />
        <Crumb href="#">OMSI 2</Crumb><Chev sw={2} />
        <Crumb href="#">Fonts</Crumb>
        <AddressTools>
          <button aria-label="Předchozí umístění"><Chev d="M1 1l4 4 4-4" w={10} h={7} sw={2} /></button>
          <button aria-label="Aktualizovat"><Svg w={12} h={12}><path d="M8.500 2.500A4.300 4.300 0 113 3.500M2 1h3.500v3.500" fill="none" stroke="#9a9a9a" strokeWidth="1.600" /></Svg></button>
        </AddressTools>
      </AddressBox>
      <SearchBox>
        <Lens />
        <SearchInput type="text" aria-label="Prohledat" placeholder="Prohledat: Fonts" />
      </SearchBox>
    </AddressRow>
  );
}

function FileList() {
  const pane = useRef(null);

  // the list is opened a little way down
  useLayoutEffect(() => {
    pane.current.scrollTop = 14;
  }, []);

  return (
    <ListPane ref={pane}>
      <Table>
        <thead>
          <tr>
            <HeadCell $width={258} $pad={3}>
              Název
              <SortMark width="8" height="5" viewBox="0 0 8 5"><path d="M.5 4.500L4 1l3.500 3.500" fill="none" stroke="#9a9a9a" /></SortMark>
            </HeadCell>
            <HeadCell $width={144} $pad={6}>Datum změny</HeadCell>
            <HeadCell $width={120} $pad={6}>Typ</HeadCell>
            <HeadCell $width={76} $pad={6} $last>Velikost</HeadCell>
          </tr>
        </thead>
        <tbody>
          {files.map(([name, date, type, size, state], i) => (
            <Row key={i} $selected={state === 'selected'} $focused={state === 'focused'}>
              <td>
                <FileName>
                  {type === 'BMP' ? <Bmp /> : type === 'OFT' ? <Notepad /> : <FontFile />}
                  {name}
                </FileName>
              </td>
              <td>{date}</td>
              <td>{type.length === 3 ? `Soubor ${type}` : type}</td>
              <td>{size} kB</td>
            </Row>
          ))}
        </tbody>
      </Table>
    </ListPane>
  );
}

const Scenery = () => (
  <svg width="80" height="39" viewBox="0 0 80 39" aria-hidden="true">
    <path d="M22 20l8-7 4 2 8-6 10 8 4 8-34 6z" fill="url(#gPeak)" />
    <path d="M22 20c6-3 18 0 26 5l-4 8H16z" fill="#3f9a55" />
    <path d="M44 23c10-8 18-11 36-10v26H44z" fill="url(#gHill)" />
    <path d="M0 39c4-5 20-9 40-12l40-1v13z" fill="#55a544" />
    <path d="M14 39c8-8 26-9 30-12 2-2-2-3-2-4h18c0 3 0 4-6 5 12 2 14 7 26 7v4z" fill="#e8c772" />
    <path d="M20 39c8-7 24-8 28-11 2-2-3-3-2-4h10c1 3 0 4-6 4 8 3 14 8 20 12z" fill="url(#gRiver)" />
    <path d="M13 4l5 9h-2l4 8h-2l4 13H4l4-13H6l4-8H8z" fill="url(#gTree)" />
    <path d="M21 13l4 7h-2l3 6h-1l3 9H15l3-9h-1l3-6h-2z" fill="url(#gTree)" />
    <path d="M0 39c3-5 10-6 17-4l-4 4z" fill="#3b3a12" />
    <circle cx="26" cy="9" r="2" fill="#69cfe6" /><circle cx="56" cy="14" r="2" fill="#f5a400" />
    <path d="M66 3l2 2 4-1-1 3 3 2-4 1-2 2-1-4-4-1 3-1z" fill="#dd76ef" />
  </svg>
);

function TaskbarBar() {
  return (
    <Taskbar>
      <TaskButton $width={48} aria-label="Start">
        <Svg><path d="M0 2.300L7 1.300V7.600H0zM8 1.200L16 0v7.600H8zM0 8.500h7v6.200L0 13.700zM8 8.500h8V16l-8-1.200z" fill="#fff" /></Svg>
      </TaskButton>
      <TaskSearch>
        <Lens c="#e0e0e0" s={17} />
        <TaskInput aria-label="Hledat" placeholder="Sem zadejte hledaný výraz" />
        <Scenery />
      </TaskSearch>
      <TaskButton $width={48} aria-label="Cortana"><Svg><circle cx="8" cy="8" r="6.800" fill="none" stroke="#fff" strokeWidth="2" /></Svg></TaskButton>
      <TaskButton $width={50} aria-label="Zobrazení úkolů">
        <Svg><path d="M.5 0v3.500h10V0M.5 5.500h10v5H.5zM.5 16v-3.500h10V16M14.500 0v2M14.500 8.500V16" fill="none" stroke="#fff" strokeWidth="1.200" /><path d="M13 4h3v3h-3z" fill="#fff" /></Svg>
      </TaskButton>
      <TaskButton $width={50} aria-label="Edge">
        <Svg w={24} h={24}>
          <path d="M1 10C2 4 7 0 12.500 0 19 0 24 5 24 10.500c0 4-3 6-6 6s-4-1-3.500-2.300c1.800-2.500.2-6.200-4.500-6.200-4 0-8 1.500-9 2z" fill="url(#gEdge)" />
          <path d="M0 12c0-4 3.500-6.500 8-6.500 4 0 7 2.500 7 5-1-2-6-2-7 2-1 5 4 8.500 9 8 2 0 4-1 5-1.500-2 3-6 5-10 5C5 24 0 19 0 12z" fill="url(#gEdge2)" />
          <path d="M8 13c-1 6 5 10 14 6-2 3.500-6 5-10 5-5-1-8-6-4-11z" fill="#1467bd" />
        </Svg>
      </TaskButton>
      <TaskButton $width={48} $active $open aria-label="Průzkumník souborů">
        <Svg w={22} h={20}><path d="M0 1h8l2 2h11v4H0z" fill="#e8a416" /><path d="M0 4h22v14H0z" fill="#fdd268" /><path d="M4 18v-7l1-1h12l1 1v7h-3v-4H7v4z" fill="#3c96d6" /></Svg>
      </TaskButton>
      <TaskButton $width={48} aria-label="Microsoft Store">
        <Svg w={24} h={24}>
          <path d="M6.500 6V2q0-.8.800-.8h9.400q.8 0 .8.800v4" fill="none" stroke="#28b5e8" strokeWidth="2" />
          <path d="M.5 5h23v16q0 2-2 2h-19q-2 0-2-2z" fill="#f1f1f1" />
          <path d="M7.500 10h4v4h-4z" fill="#f1511b" /><path d="M12.500 10h4v4h-4z" fill="#80cc28" /><path d="M7.500 15h4v4h-4z" fill="#00adef" /><path d="M12.500 15h4v4h-4z" fill="#fbbc09" />
        </Svg>
      </TaskButton>
      <TaskButton $width={50} aria-label="Pošta">
        <Svg w={24} h={24}>
          <path d="M0 9l12-8 12 8v3H0z" fill="#0f57a8" /><path d="M2 9h20l-8 8h-4z" fill="#f3f3f3" />
          <path d="M0 9l12 8.500L24 9v14H0z" fill="#2cb0f2" /><path d="M0 23l12-8 12 8z" fill="#1b8bde" />
        </Svg>
      </TaskButton>
      <TaskButton $width={40} $narrow $open aria-label="Seznam">
        <Svg w={26} h={26}>
          <circle cx="11.500" cy="14" r="11" fill="#f4f4f4" />
          <path d="M16 8.500c-5-1-9 1-8 3.500s8 2 8 5-5 4-9 3" fill="none" stroke="#c91c1c" strokeWidth="2.200" />
          <circle cx="20" cy="5.500" r="4.800" fill="#f5282e" /><circle cx="20" cy="5.500" r="1.200" fill="#ffb0b0" />
        </Svg>
      </TaskButton>

      <Tray>
        <Weather>
          <Svg w={24} h={24}>
            <circle cx="10.500" cy="11" r="10" fill="url(#gSun)" />
            <path d="M11 17a3 3 0 010-6 4 4 0 017-1 3.500 3.500 0 012 7z" fill="#d5e2f5" /><circle cx="20" cy="20" r="3.500" fill="#e3183a" />
          </Svg>
          <span>12°C</span>
          <span>Přev. slunečno</span>
        </Weather>
        <TrayIcons>
          <Chev d="M1 7l6-6 6 6" w={14} h={8} c="#fff" sw={1.3} />
          <Svg><path d="M4 1.500q4-2 8 0M4 14.500q4 2 8 0M3.500 4.500h7v7h-7zM10.500 7l3-2v6l-3-2" fill="none" stroke="#fff" strokeWidth="1.200" /></Svg>
          <Svg><path d="M5 3.500h10.500v8H5M10 11.500v3M6 14.500h7M.5 2.500h4v4h-4zM2.500 6.500v6h2" fill="none" stroke="#fff" /></Svg>
          <Svg><path d="M.5 5.500h3l3.500-3.500v12L3.500 10.500h-3z" fill="none" stroke="#fff" /><path d="M9.500 5.500q1.500 2.500 0 5M11.500 3.500q3 4.500 0 9" fill="none" stroke="#fff" /><path d="M13.500 1.500q4 6.500 0 13" fill="none" stroke="#777" /></Svg>
        </TrayIcons>
        <Clock><span>17:58</span><span>26.09.2022</span></Clock>
        <Notifications aria-label="Oznámení">
          <Svg w={26} h={26}>
            <path d="M1 2h16v13H9l-4 4v-4H1z" fill="#fff" /><path d="M4 5.500h10M4 8.500h10M4 11.500h7" stroke="#101010" />
            <circle cx="17" cy="17" r="7.800" fill="#2b2b2b" stroke="#8a8a8a" />
            <text x="17" y="21" textAnchor="middle" fontSize="11" fill="#fff">1</text>
          </Svg>
        </Notifications>
        <Peek />
      </Tray>
    </Taskbar>
  );
}

export default function App() {
  return (
    <Desktop>
      <GlobalStyle />
      <Defs />
      <TitleBar>
        <QuickAccess>
          <Folder /><Divider /><Check /><Folder />
          <Svg w={7} h={8}><path d="M0 .5h7" stroke="#ddd" /><path d="M0 4h7L3.500 7.500z" fill="#ddd" /></Svg>
        </QuickAccess>
        <Caption1>
          <Divider />
          <WindowTitle>Fonts</WindowTitle>
        </Caption1>
        <WindowButton aria-label="Minimalizovat"><Svg w={10} h={10}><path d="M0 5.500h10" stroke="#fff" /></Svg></WindowButton>
        <WindowButton aria-label="Obnovit"><Svg w={10} h={10}><path d="M.5 2.500h7v7h-7zM2.500 2.500v-2h7v7h-2" fill="none" stroke="#fff" /></Svg></WindowButton>
        <WindowButton aria-label="Zavřít"><Svg w={10} h={10}><path d="M0 0l10 10M10 0L0 10" stroke="#fff" strokeWidth="1.200" /></Svg></WindowButton>
      </TitleBar>
      <TabRow>
        <Tab $width={56} $file>Soubor</Tab>
        <Tab $width={59} $active>Domů</Tab>
        <Tab $width={65}>Sdílení</Tab>
        <Tab $width={79}>Zobrazení</Tab>
        <TabTools>
          <Chev d="M1 6l4-4 4 4" w={10} h={7} c="#aaa" sw={2} />
          <Svg><circle cx="8" cy="8" r="7.800" fill="#0a6fd0" /><path d="M5.500 6c0-3.300 5-3.300 5-.3 0 2-2.500 1.800-2.500 4M8 11v2" fill="none" stroke="#fff" strokeWidth="1.800" /></Svg>
        </TabTools>
      </TabRow>
      <RibbonBar />
      <AddressBar />
      <WhiteLine />
      <Body>
        <Sidebar>
          {sections.map((items, i) => (
            <nav key={i}>
              {items.map(([label, Icon, kind], j) => (
                <SideItem key={j} href="#" $root={kind === 'root'} $active={kind === 'active'}>
                  <Icon />{label}{kind === 'pin' && <Pin />}
                </SideItem>
              ))}
            </nav>
          ))}
        </Sidebar>
        <FileList />
        <Scrollbar>
          <Chev d="M1 6l4-4 4 4" w={10} h={7} c="#7a7a7a" sw={2} />
          <Space $grow={32} /><Thumb /><Space $grow={67} />
          <Chev d="M1 1l4 4 4-4" w={10} h={7} c="#7a7a7a" sw={2} />
        </Scrollbar>
      </Body>
      <StatusBar>
        <span>Počet položek: 4 531</span><StatusLine />
        <span>Počet vybraných položek: 6; 2,09 MB</span><StatusLine />
        <ViewButtons>
          <ViewButton $active aria-label="Podrobnosti">
            <Svg><path d="M1 1h4v14H1z" fill="#fff" /><path d="M2 3h2v2H2z" fill="#555" /><path d="M2 7h2v2H2z" fill="#2a8ade" /><path d="M2 11h2v2H2z" fill="#d03030" /><path d="M7 3.500h4M7 7.500h4M7 11.500h4M13 3.500h3M13 7.500h3M13 11.500h3" stroke="#8c8c8c" /></Svg>
          </ViewButton>
          <ViewButton aria-label="Velké ikony"><Photo /></ViewButton>
        </ViewButtons>
      </StatusBar>
      <TaskbarBar />
    </Desktop>
  );
}
